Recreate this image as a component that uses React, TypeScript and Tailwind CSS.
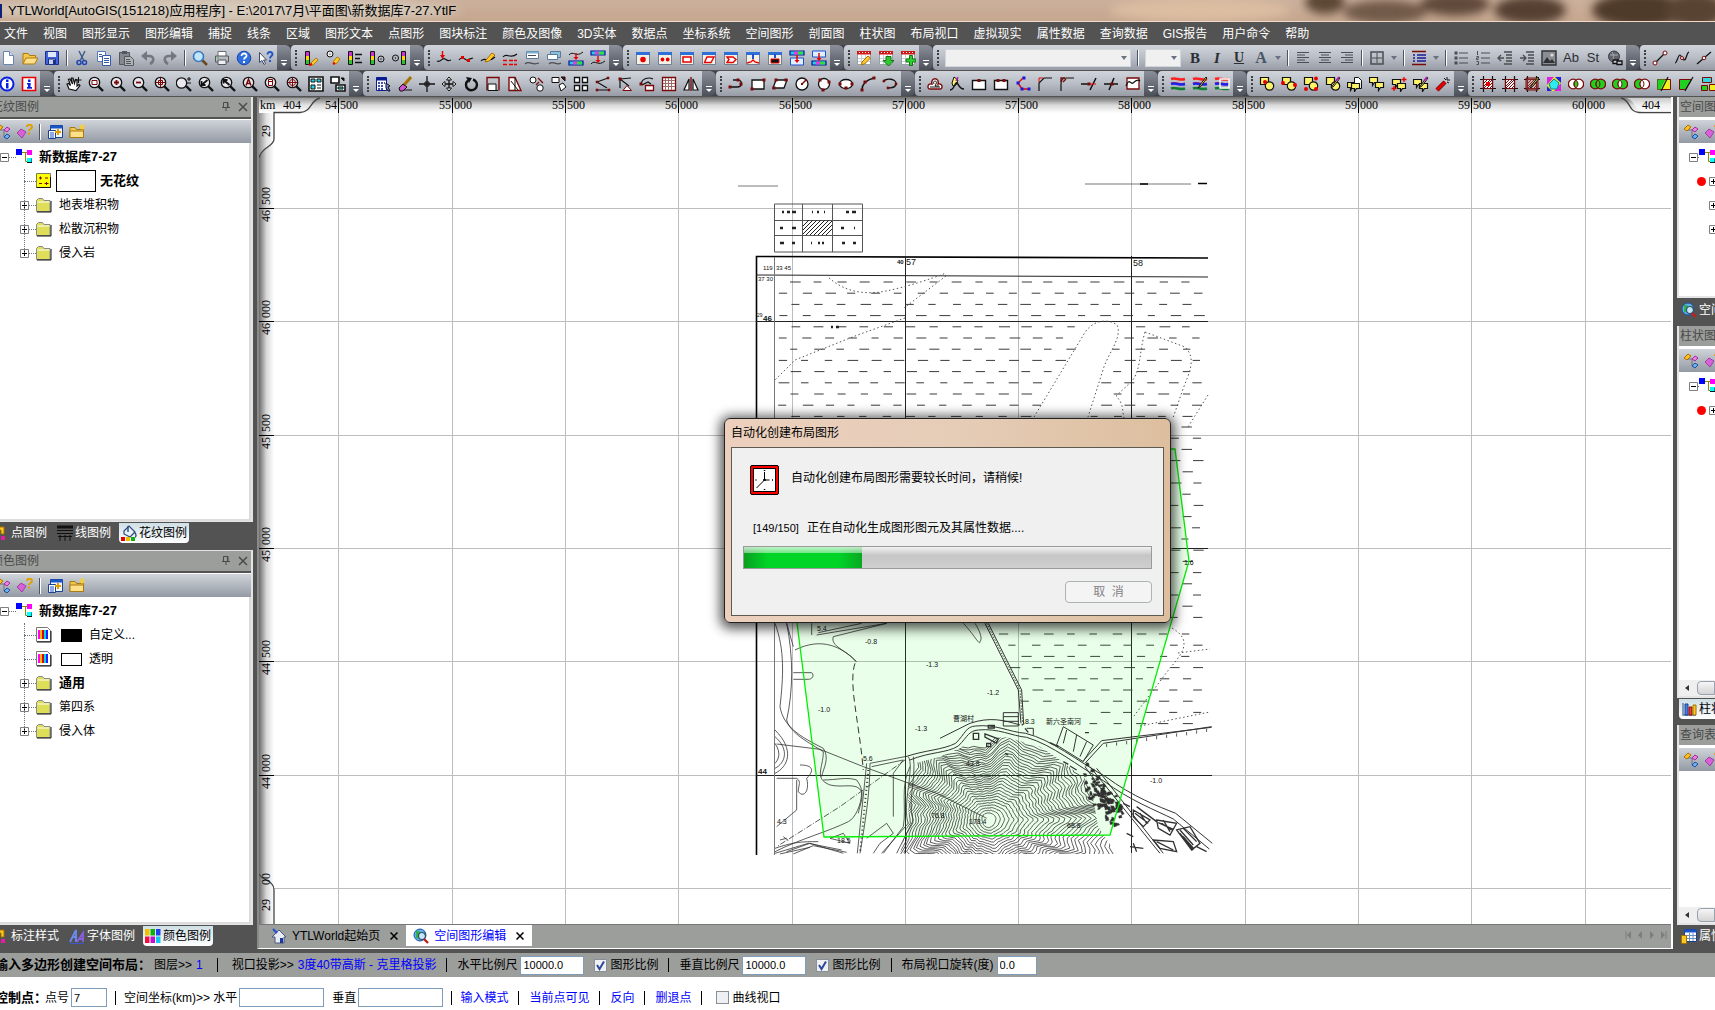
import React from "react";

type Shape = [string, string | null, string?, number?];

const b = (x: number, y: number, w: number, h: number) => `M${x} ${y}h${w}v${h}h${-w}z`;
const c = (x: number, y: number, r: number) => `M${x - r} ${y}a${r} ${r} 0 1 0 ${2 * r} 0a${r} ${r} 0 1 0 ${-2 * r} 0z`;

const K = "#111111";
const RED = "#e80000";
const MAR = "#7a0a0a";
const BLU = "#1f4fd0";
const YEL = "#fff36a";
const GRY = "#4a4d52";

const glass = (hx = 6.5, hy = 6.5): Shape[] => [
  ["M10 10L15 15", K, "none", 2.4],
  [c(hx, hy, 5.2), K, "#e8e8ee", 1.3],
];
const win = (): Shape[] => [
  [b(1.5, 2.5, 13, 12), "#6f7f95", "#f4f1e4"],
  [b(1, 2, 14, 3), null, "#2f6fd8"],
];
const tag = (x: number, y: number): Shape[] => [[`M${x} ${y}h8v5h-3l-2 3v-3h-3z`, K, YEL, 1.2]];
const sqc = (): Shape[] => [
  [b(1.5, 1.5, 8, 7), K, YEL, 1.2],
  [c(10.5, 10, 4.2), K, YEL, 1.2],
];
const bars = (x: number): Shape[] => [
  [b(x, 1.5, 4, 13), K, "#ffd800"],
  [b(x + 0.5, 2, 3, 4), null, "#d030d0"],
  [b(x + 0.5, 10, 3, 4), null, "#30c030"],
];
const calendar = (): Shape[] => [
  [b(1.5, 2.5, 13, 12), "#9aa0a8", "#ffffff"],
  [b(1, 1, 14, 3.5), null, "#d01818"],
  ["M5.5 5v9M9.5 5v9M2 8.5h12M2 11.5h12", "#c9ced6"],
  ["M3 2.5h1M6 2.5h1M9 2.5h1M12 2.5h1", "#ffffff"],
];
const hatch = (): Shape[] => [
  ["M3.5 0v16M12.5 0v16M0 3.5h16M0 12.5h16", K, "none", 1.2],
  [b(3.5, 3.5, 9, 9), MAR, "#ffffff", 1.2],
  ["M4 7l3-3M4 10l6-6M4 12l8-8M7 12l5-5M10 12l2-2", MAR],
];
const rings = (l: string, m: string, r: string): Shape[] => [
  [c(5.2, 8, 4.8), MAR, l, 1.3],
  [c(10.8, 8, 4.8), MAR, r, 1.3],
  ["M8 4.2a4.6 4.6 0 0 1 0 7.6a4.6 4.6 0 0 1 0-7.6z", MAR, m],
];
const dots = (pts: number[][], col = MAR, s = 3): Shape[] => pts.map(([x, y]) => [b(x - s / 2, y - s / 2, s, s), null, col] as Shape);
const band = (y: number): Shape[] => [
  [b(1, y, 14, 4), "#1010a0", "#20d0e0", 1.2],
  [b(5, y + 0.5, 4, 3), null, "#e040e0"],
  [b(9, y + 0.5, 5, 3), null, "#30e040"],
];
const stripes = (): Shape[] => [
  ["M1 3c5-2 8 2 14 0", "#ff2020", "none", 2.6],
  ["M1 7c5-2 8 2 14 0", "#ff2020", "none", 1],
  ["M1 8c5-2 8 2 14 0", "#2020e8", "none", 2.6],
  ["M1 12.5c5-2 8 2 14 0", "#108030", "none", 2.6],
];
const pencil: Shape = ["M14 1l-6 8-2 3 3-2 6-8z", K, YEL];

const I: Record<string, Shape[]> = {
  new: [["M3.5 1.5h6l4 4v9h-10z", "#6a86b0", "#ffffff"], ["M9.5 1.5v4h4", "#6a86b0", "#cfe0f5"]],
  open: [["M1 13.5v-10h5l1.500 2h6v3", "#b07a10", "#f5c74a"], ["M1 14l3-6h12l-3.500 6z", "#b07a10", "#ffe08a"]],
  save: [[b(1.5, 1.5, 13, 13), "#1a2f8a", "#4464d8"], [b(4, 2, 8, 5), null, "#dfe8ff"], [b(4.5, 9, 7, 5.5), "#1a2f8a", "#c8d2e8"], [b(9, 10, 2, 4), null, "#1a2f8a"]],
  cut: [["M5 1l4.500 9M11 1L6.500 10", "#3a5a86", "none", 1.4], [c(5, 12.500, 2), "#2345b0", "none", 1.5], [c(10.500, 12.500, 2), "#2345b0", "none", 1.5]],
  copy: [[b(1.5, 1.5, 8, 10), "#5878b8", "#ffffff"], [b(6.5, 5.5, 8, 10), "#3558b0", "#ffffff"], ["M8 8.500h5M8 10.500h5M8 12.500h5M3 4.500h3M3 6.500h3", "#3558b0"]],
  paste: [[b(1.5, 2.5, 10, 12), "#55585e", "#85888e"], [b(4, 1, 5, 3), null, "#55585e"], ["M6.500 6.500h6l3 3v6h-9z", "#55585e", "#b0b3b8"], ["M8 9.500h4M8 11.500h5M8 13.500h5", "#55585e"]],
  undo: [["M4 6h5c6 0 5 6 1 8", "#74777d", "none", 2.6], ["M1 6l6-5v10z", null, "#74777d"]],
  redo: [["M12 6H7c-6 0-5 6-1 8", "#74777d", "none", 2.6], ["M15 6L9 1v10z", null, "#74777d"]],
  find: [["M10 10l5 5", "#6a4a20", "none", 2.6], [c(6.5, 6.5, 5), "#3a78c0", "#bfe6ff", 1.6]],
  print: [[b(4, 1.5, 8, 5), "#6a6d72", "#ffffff"], [b(1.5, 6, 13, 6), "#55585e", "#b8bcc2"], [b(4, 10, 8, 4.500), "#55585e", "#eef0f3"], ["M3 8h2", "#30c030"]],
  help: [[c(8, 8, 6.8), "#1a45a8", "#2f6fe0"], ["M5.500 6c0-3.500 5.500-3.200 5 0c-.3 1.600-2.500 1.500-2.500 3.500", "#ffffff", "none", 1.8], [b(7, 11, 2, 2), null, "#ffffff"]],
  ask: [["M1.500 2.500v10l2.500-2 2 4 1.500-1-2-3.500h3z", "#3a4a66", "#ffffff"], ["M9.500 4.500c0-3.500 5.500-3 5 0c-.3 1.600-2.500 1.500-2.500 4", "#1f55c8", "none", 1.9], [b(11, 10, 2, 2), null, "#1f55c8"]],
  r1: [...bars(2.5), ["M8 13l5-5 2 2-5 5-3 .5z", "#b08000", "#ffc830"], ["M6 15l3-1", RED, "none", 2]],
  r2: [[c(5, 4, 3), K, "#eeeeee"], [c(5, 4, .6), null, K], ["M8 12l4-5 3 2-4 5z", "#b08000", "#ffc830"], ["M8 14l2-1", RED, "none", 2]],
  r3: [...bars(1.5), ["M8 4.500h7M8 8.500h5M8 12.500h7", K, "none", 1.3]],
  r4: [...bars(1.5), [c(12, 9, 3), K, "none"], [c(12, 9, .7), null, K]],
  r5: [...bars(10.5), [c(4.500, 8, 3), K, "none"], [c(4.500, 8, .7), null, K]],
  l1: [["M1 11c4 2 5-4 8-2s3 2 6 1", K, "none", 1.2], ["M6.500 1v5", RED, "none", 1.4], ["M4 5h5l-2.500 4z", null, RED]],
  l2: [["M1 10c4-6 7 2 9 0s3-1 5-2", K, "none", 1.2], [b(3, 6, 3, 3), null, RED], [b(9, 9, 3, 3), null, RED]],
  l3: [["M1 11c4-5 7 3 14-4", K, "none", 1.2], ["M6 10l6-7 3 2-6 6-4 1z", "#a87000", "#ffc830"]],
  l4: [["M1 7c4-5 7 3 14-3", K, "none", 1.2], ["M1 10.500h4M7 10.500h4M12 10.500h3M1 14.500h4M7 14.500h4M12 14.500h3", RED, "none", 1.300]],
  l5: [[b(2.500, 1.500, 12, 7), "#5a7a9a", "#ffffff"], [b(2.500, 1.500, 12, 2), null, "#7ab0d0"], ["M4 5.500h8", GRY], ["M1 14c4-4 7 2 14-1", GRY, "none", 1.200]],
  l6: [[b(4.500, 1.500, 10, 6), "#5a7a9a", "#8cc0d8"], [b(1.500, 4.500, 10, 5), "#5a7a9a", "#ffffff"], ["M3 14c4-4 7 2 12-1", GRY, "none", 1.200]],
  l7: [...band(11), ["M1 5c4-5 7 3 14-3", K], ["M8 3v5", RED, "none", 1.400], ["M5.500 7h5L8 10z", null, RED]],
  l8: [...band(1), ["M1 14c4-5 7 3 14-3", K], ["M8 6v5", RED, "none", 1.400], ["M5.500 10h5L8 13z", null, RED]],
  w1: [...win(), [c(8, 9.500, 2.800), null, RED]],
  w2: [...win(), [c(5.500, 9.500, 1.900), null, RED], [c(10.700, 9.500, 1.900), null, RED]],
  w3: [...win(), [b(4, 7, 8, 5), RED, "#ffffff", 1.500]],
  w4: [...win(), ["M6 7h7l-3 5.500H3.500z", RED, "#ffffff", 1.400]],
  w5: [...win(), ["M4 7h6l3 2.500-3 3H4l2-3z", RED, "#ffffff", 1.400]],
  w6: [...win(), ["M2 13l4-1 2-2 2 2 4 1", RED, "none", 1.300], ["M8 4v5", BLU, "none", 2]],
  w7: [...win(), [b(4, 9, 8, 4), RED, K], ["M8 4v4", BLU, "none", 2]],
  w8: [[b(1.5, 8, 13, 7), BLU, "#dff0ff"], ...band(1), ["M8 5v6", RED, "none", 1.500], ["M5.500 10h5L8 13z", null, RED]],
  w9: [[b(1.5, 1, 13, 6), BLU, "#dff0ff"], ...band(11), ["M8 3v6", RED, "none", 1.500], ["M5.500 8h5L8 11z", null, RED]],
  c1: [...calendar(), ["M6 12l6-6 2.500 2-6 6-3 .7z", "#a87000", "#ffc830"]],
  c2: [...calendar(), ["M8 6.500h5v4h3L10.500 16 5 10.500h3z", "#187018", "#30c830"]],
  c3: [...calendar(), ["M9.500 5.500h3v3.500h3.500v3h-3.500V15.500h-3V12H6V9h3.500z", "#187018", "#30d030"]],
  al: [["M2 2.500h12M2 5h8M2 7.500h12M2 10h8M2 12.500h12", GRY, "none", 1.200]],
  ac: [["M2 2.500h12M4 5h8M2 7.500h12M4 10h8M2 12.500h12", GRY, "none", 1.200]],
  ar: [["M2 2.500h12M6 5h8M2 7.500h12M6 10h8M2 12.500h12", GRY, "none", 1.200]],
  bd: [[b(2, 2, 12, 12), GRY, "none", 1.500], ["M8 3v10M3 8h10", GRY, "none", 1]],
  ls: [["M1 1.500h14M1 14.500h14", MAR, "none", 1.600], ["M6 5h9M6 8h9M6 11h9M2 5h2M2 8h2M2 11h2", "#1a1a9a", "none", 1.500]],
  bl: [["M6 3h9M6 8h9M6 13h9", GRY, "none", 1.200], ...dots([[3, 3], [3, 8], [3, 13]], GRY)],
  nl: [["M6 3h9M6 8h9M6 13h9M2.500 1v4M1.500 6.500h2v1.500h-2v1.500h2M1.500 11.500h2v3h-2", GRY]],
  o1: [["M7 2h8M9 5h6M9 8h6M9 11h6M7 14h8M1 8h6M4 5L1 8l3 3", GRY, "none", 1.300]],
  o2: [["M7 2h8M9 5h6M9 8h6M9 11h6M7 14h8M1 8h6M4 5l3 3-3 3", GRY, "none", 1.300]],
  im: [[b(1, 1, 14, 14), "#2f3134", "#8a8d92", 1.400], ["M2 13l4-6 3 4 2-2 3 4z", null, "#2f3134"], [c(11, 5, 1.600), null, "#dddddd"]],
  gl: [[c(7, 6.500, 5.500), "#3a3d42", "#60636a"], ["M3 5h8M5 2c2 3 2 6 0 9", "#aaaeb4"], [b(6, 10, 5, 3.500), K, "#c4c7cc", 1.300], [b(10, 11, 5, 3.500), K, "#c4c7cc", 1.300]],
  s1: [["M3 13L13 3", K, "none", 1.200], [c(3, 13, 2), MAR, "#ffffff"], [c(13, 3, 2), MAR, "#ffffff"]],
  s2: [["M1 13c2 0 3-8 5-8s1 5 4 5 2-7 5-8", K, "none", 1.200], [c(8, 8, 1.500), MAR, "#ffffff"]],
  s3: [["M1 14L15 2", K, "none", 1.200], [c(8, 8, 1.800), MAR, "#ffffff"]],
  i1: [[c(8, 8, 6.500), "#0a20e0", "#ffffff", 2], [b(7, 3.500, 2.500, 2.500), null, "#0a20e0"], [b(7, 7, 2.500, 5.500), null, "#0a20e0"]],
  i2: [[b(1.500, 1.500, 13, 13), RED, "#ffffff", 1.600], [b(7, 3.500, 2.500, 2.500), null, "#0a20e0"], [b(6, 7, 3.500, 1.500), null, "#0a20e0"], [b(7, 7, 2.500, 4), null, "#0a20e0"], [b(6, 11, 5, 1.700), null, "#0a20e0"]],
  hand: [["M3 13L1 8l1.500-.5 2 2-2-6 1.500-.5 2.500 5-1-6 1.500 0 1.500 5.500 1-4 1.500.5v6l2-1.500 1 1-4 5z", K, "#ffffff", 1.2], ["M12.500 1v6M9.500 4h6", K, "none", 1]],
  z1: [...glass(), [b(4, 4.500, 5, 4), MAR, "#ffffff"]],
  z2: [...glass(), ["M6.500 4v5M4 6.500h5", MAR, "none", 1.800]],
  z3: [...glass(), ["M4 6.500h5", MAR, "none", 1.800]],
  z4: [...glass(), ["M6.500 1.500v10M1.500 6.500h10", MAR, "none", 1.100], [b(4.500, 4.500, 4, 4), MAR, "none"]],
  z5: [...glass(5.500, 7), ["M13 1v4M11 3h4M11 7h4", K]],
  z6: [...glass(), ["M3.500 9l6-5M3.500 5v4h4", K, "none", 1.800]],
  z7: [...glass(), ["M3.500 4l6 5M3.500 7.500V4h4", K, "none", 2]],
  z8: [...glass(), ["M4 9.500l2.500-6.500 2.500 6.500M5 7.500h3", MAR, "none", 1.500]],
  z9: [...glass(), [b(4.500, 3.500, 4, 6), MAR, "#ffffff"], ["M5 5.500h3", MAR]],
  z10: [...glass(), [c(6.500, 6.500, 3), MAR, "none"], ["M6.500 1.500v10M1.500 6.500h10", MAR]],
  v1: [[b(1, 1, 14, 14), K, "#ffffff", 1.600], [b(3, 3, 4, 3), K, "#20d8e0"], [b(9, 3, 4, 3), K, "#20d8e0"], [b(3, 9, 4, 4), K, "#20d8e0"], ["M9 9h4M9 12h4", K]],
  v2: [[b(1, 1, 8, 6), K, "#ffffff", 1.600], [b(6, 9, 9, 6), K, "#ffffff", 1.600], [b(8, 11, 5, 2), K, "#20d8e0"], ["M11 2l3 3v-3z", K, K]],
  e1: [[b(1.500, 1.500, 10, 13), "#0a1a90", "#ffffff"], [b(1.500, 1.500, 10, 3), null, "#0a1a90"], ["M3 7h2M6 7h2M9 7h1M3 10h2M6 10h2M3 13h2M6 13h2", "#0a1a90", "none", 1.600], ["M11 7l4 3-2 1 2 4-2 0-2-3z", K, "#6a88f0"]],
  e2: [["M14 1L7 9", "#a87000", "none", 3], ["M2 12l4-4 4 3-4 4H3z", K, "#d050d0"], ["M7 14h8", K]],
  e3: [["M8 0v16M0 8h16", K, "none", 1.300], [b(6, 6, 4, 4), K, "none"]],
  e4: [["M8 1v14M1 8h14", K, "none", 1.300], ["M5.500 4L8 1l2.500 3zM5.500 12L8 15l2.500-3zM4 5.500L1 8l3 2.500zM12 5.500L15 8l-3 2.500z", K, "#ffffff"]],
  e5: [["M10 3.500a5.500 5.500 0 1 1-5 1", K, "none", 2.400], ["M3 1l6 1-3 5z", null, K]],
  e6: [["M2 14.500V1.500h12v13", MAR, "none", 1.400], [b(3, 8, 8, 6.500), K, "#ffffff"], ["M4 14.500h9", K]],
  e7: [["M2 14.500V1.500h6l6 13z", MAR, "#ffffff", 1.400], ["M8 1.500v13M4 5l7 9", K]],
  e8: [[c(4, 4, 3), K, "#ffffff"], [c(11, 12, 3.200), K, "#ffffff"], ["M9 2l5 5M10 6l-3 3", MAR, "none", 1.300]],
  e9: [[b(1, 1.500, 7, 5), K, "#ffffff"], ["M8 9l4 -2 3 4-5 4z", K, "#ffffff"], ["M10 1l4 4v-4z", K, MAR]],
  e10: [[b(1.500, 1.500, 5, 5), K, "#ffffff", 1.3], [b(9.500, 1.500, 5, 5), K, "#ffffff", 1.3], [b(1.500, 9.500, 5, 5), K, "#ffffff", 1.3], [b(9.500, 9.500, 5, 5), K, "#ffffff", 1.3]],
  e11: [["M2 6L13 2M2 6l10 6M2 14h13", K, "none", 1.100], ...dots([[2, 6], [13, 2], [2, 14], [14, 14]], MAR, 2.500)],
  e12: [["M3 12V3l9 7M3 3l11-1", K, "none", 1.200], ["M6 14.500l4-5 4.500 5z", MAR, "#ffffff"], ...dots([[3, 3]], MAR)],
  e13: [["M2 8c1-6 8-7 12-5M3 9l6-3 3 2", K, "none", 1.200], [b(6.500, 9.500, 8, 5), MAR, "#ffffff", 1.300], ...dots([[2, 8]], MAR)],
  e14: [[b(1.500, 1.500, 13, 13), MAR, "#ffffff", 1.3], ["M4.500 2v12M7.500 2v12M10.500 2v12M2 4.500h12M2 7.500h12M2 10.500h12", "#a06a6a"]],
  e15: [["M6 3v11H1z", K, "#ffffff", 1.2], ["M10 3v11h5z", K, "#ffffff", 1.2], ["M8 1v14", MAR, "none", 1.400]],
  p1: [["M1 11h8c6 0 5-6 2-7M11 4H5", K, "none", 1.300], ...dots([[13, 8], [2, 11], [10, 4]])],
  p2: [[b(2, 4, 12, 9), K, "#ffffff", 1.300], ...dots([[2, 13], [14, 4]])],
  p3: [["M4 4h11l-3 8H1z", K, "#ffffff", 1.300], ...dots([[4, 4], [14, 4], [2, 12]])],
  p4: [[c(8, 8, 6), K, "#ffffff", 1.300], ["M8 8l4-4", MAR, "none", 1.400], ...dots([[8, 8], [12, 4]], MAR, 2)],
  p5: [[c(8, 8, 5.500), K, "#ffffff", 1.300], ...dots([[4, 4], [13, 6], [7, 14]])],
  p6: [["M1.500 8a6.500 4.500 0 1 0 13 0a6.500 4.500 0 1 0-13 0z", K, "#ffffff", 1.300], ...dots([[2, 8], [14, 8], [8, 12]])],
  p7: [["M2 14C2 8 6 4 14 2", K, "none", 1.300], ...dots([[2, 14], [5, 6], [14, 2]])],
  p8: [["M1 6c3-5 14-3 13 2s-9 4-8 3", K, "none", 1.300], ...dots([[6, 12], [2, 5], [14, 8]], MAR, 2.5)],
  q1: [["M5 8c-2-7 8-7 6 0 5-1 5 5 2 5H3c-3 0-3-6 2-5z", MAR, "#ffffff", 1.400], ["M7 8c-2-4 4-4 2 0l-1 2h4M3 11h10", K]],
  q2: [["M5 1l4 3-2 5-3 1-1-3z", K, YEL], ["M1 14c4 0 4-5 6-7s2 6 8 6", K, "none", 1.400], ["M9 1l-2 4", "#b020b0", "none", 1.600]],
  q3: [[b(1.500, 4.500, 13, 9), K, "#ffffff", 1.400], ...dots([[8, 4.500]])],
  q4: [[b(1.500, 4.500, 13, 9), K, "#ffffff", 1.400], ...dots([[5, 4.500], [11, 4.500]])],
  q5: [["M9 1L3 7l4 6h7", RED, "none", 1.400], ...dots([[9, 2], [3, 7], [7, 13], [14, 13]], "#1818e0")],
  q6: [["M2 15V7l5-5h8", K, "none", 1.200], ["M2 6V2h4", RED]],
  q7: [["M2 15V8c0-4 2-6 5-6h8", K, "none", 1.200], ["M2 6V2h4M4 6l3-3", MAR, "none", 1.400]],
  q8: [["M0 8h8M15 2L9 14", K, "none", 1.500], ["M9 8h6", RED], ...dots([[8, 8]])],
  q9: [["M1 8h14M11 2L6 14", K, "none", 1.500], ...dots([[9, 8]])],
  q10: [["M2 2h12v11H2z", MAR, "#ffffff", 1.300], ["M1 10c3-9 5-1 7-3s5-4 7-2", K, "none", 1.200]],
  t1: stripes(),
  t2: [...stripes(), pencil],
  t3: [...stripes(), [b(6, 3, 9, 9), "#ffffff", "none", 1.400]],
  g1: [...sqc(), [c(6, 6, 2), null, RED]],
  g2: [...sqc(), [c(2, 7, 2), null, RED], [c(14, 9, 2), null, RED]],
  g3: [...sqc(), [c(13, 2.500, 2), null, RED], [c(3, 13, 2), null, RED], [c(13, 13, 2), null, RED]],
  g4: [...sqc(), pencil, ["M14 1l-3 4", "#b020b0", "none", 2]],
  g5: [...tag(.500, 6.500), ["M7.500 1.500h4l3 3v8h-7z", K, "#ffffff"], ...tag(4.500, 7.500)],
  g6: [...tag(.500, 1.500), ...tag(6.500, 6.500)],
  g7: [...tag(1.500, 3.500), ...tag(6.500, 7.500), ["M13 1v5M10.500 3.500h5M3 10v5M.5 12.500h5", RED, "none", 1.300]],
  g8: [...tag(.500, 3.500), ...tag(6.500, 7.500), pencil, ["M14 1l-3 4", "#b020b0", "none", 2]],
  g9: [["M2 14L10 6", "#701010", "none", 4.500], ["M2 14L10 6", RED, "none", 2.500], ["M12 1v3M15 4h-3M9 2l2 2M14 7l-2-1", K]],
  h1: [...hatch(), [b(6, 6, 4, 4), null, RED]],
  h2: hatch(),
  h3: [...hatch(), [b(2, 2, 12, 12), MAR, "#8a4a4a66"], pencil],
  h4: [[b(1, 1, 14, 14), null, "#f0f020"], ["M1 1h7L1 9zM15 15H8l7-8z", null, "#e020e0"], ["M15 1H9l6 6zM1 15V10l5 5z", null, "#2020e0"], ["M8 3l5 4-2 6H5L3 8z", "#108090", "#30e8f0"]],
  k1: rings("#ffffff", "#20d020", "#ffffff"),
  k2: rings("#20d020", "#20d020", "#20d020"),
  k3: rings("#20d020", "#ffffff", "#20d020"),
  k4: rings("#20d020", "#ffffff", "#ffffff"),
  k5: [[b(1.500, 3.500, 13, 10), MAR, "#f0f020"], ["M1.500 3.500h8l-5 10h-3z", null, "#20d020"], ["M12 1L5 15", K, "none", 1.200]],
  k6: [["M1.500 3.500h12l-6 10h-6z", MAR, "#20d020"], ["M15 1L7 15", K, "none", 1.200]],
  k7: [[b(2.500, 1.500, 9, 5), MAR, "#30d8e0"], [b(1.500, 9.500, 6, 5), MAR, "#20d020"], [b(9.500, 8.500, 6, 6), MAR, "#f0f020"]],
  tree: [["M5 6h4v7h4M9 6h4", "#6a7080"], ["M1 5l4-4 3 2-4 4z", "#b07000", "#ffc020"], ["M9 6l3-3 3 2-3 3z", "#a030a0", "#f080e0"], ["M9 13l3-3 3 2-3 3z", "#2050a0", "#70b0f0"]],
  gem: [["M0 9l4-4 5 3-4 6z", "#a040a0", "#d860d8"], ["M10 3c0-3 5-3 5 0 0 2-3 2-3 4", "#e0a000", "none", 2], [b(11, 8.500, 2, 2), null, "#e0a000"]],
  addw: [[b(3.500, 1.500, 12, 12), "#1a4090", "#f0f5ff"], [b(3.500, 1.500, 12, 3), null, "#1a55c8"], [b(1.500, 6.500, 7, 8), "#1a4090", "#ffffff"], ["M3 9h4M3 11h4M3 13h4", BLU], ["M11 5v6M8 8h6", "#e0a000", "none", 2]],
  fold: [["M1 13.500v-10h5l1.500 2h7v8z", "#a87a10", "#f3c64e"], ["M1 7h13.500v6.500H1z", "#a87a10", "#ffe08a"], ["M13 0v6M10 3h6M11 1l4 4M15 1l-4 4", "#ffd020"]],
  house: [["M1 9L8 2l7 7-2 0v6H4V9z", "#4a5a80", "#e8ecf4"], [b(9, 10, 3, 5), null, "#1a3aa0"], ["M2 1l4 4", BLU, "none", 2]],
  globe: [[c(7, 7, 6), "#1a55a0", "#60b0f0"], ["M3 3c3-1 5 1 4 4s-3 4-4 3zM9 5l3-1v5z", null, "#30b050"], [c(9, 8, 3.500), "#305070", "#e0f4ffcc", 1.200], ["M11 11l4 4", "#c02020", "none", 2.400]],
  puz: [[b(0, 8, 7, 7), null, "#30a040"], ["M4 2h7v7H8V5H4z", "#a07000", "#ffc820"], [b(8, 11, 4, 4), null, "#e020a0"]],
  lines: [["M0 2h16", "#111111", "none", 3], ["M0 5.500h16M0 8.500h16", "#111111"], ["M1 11.500h14M3 10v6M8 10v6M13 10v6", "#111111"]],
  bucket: [["M3 6l5-5 6 6-5 5-6-3z", "#2a4a80", "#e8f0fa", 1.200], ["M7 1v6M13 7c3 2 2 5 1 5", "#2a4a80", "none", 1.400], [b(0, 12, 4, 4), null, RED], [b(5, 12, 4, 4), null, "#f0c000"], [b(10, 12, 4, 4), null, "#10b010"]],
  fonts: [["M1 14L7 2v12M3 9h5", "#6a8af0", "none", 1.800], ["M8 14l6-9v9M10 11h5", "#8a60e0", "none", 1.800], ["M1 15.500h14", "#3a58c8"]],
  grid: [[b(0, 1, 4.500, 6.500), null, "#f0c000"], [b(5.500, 1, 4.500, 6.500), null, "#10b010"], [b(11, 1, 4.500, 6.500), null, "#2040f0"], [b(0, 8.500, 4.500, 6.500), null, "#f01040"], [b(5.500, 8.500, 4.500, 6.500), null, "#c010d0"], [b(11, 8.500, 4.500, 6.500), null, "#10c8f0"]],
  chart: [["M2 2v12h13", "#5a78a8", "none", 1.400], [b(4, 3, 3, 11), "#1a4090", "#4a80e0"], [b(8, 6, 3, 8), "#901010", "#e04030"], [b(12, 4, 3, 10), "#a07000", "#ffc820"]],
  table: [[b(3.500, 1.500, 12, 12), "#1a4090", "#ffffff"], [b(3.500, 1.500, 12, 3), null, "#1a55c8"], ["M4 7.500h11M4 10.500h11M8.500 5v8M12 5v8", "#6a90c8"], [b(.5, 7.500, 5, 8), "#a07000", "#ffc820"]],
  root: [["M5 3.500h9M9.500 3.500v9h5", "#8a8a00"], [b(0, 0, 6, 6), null, "#0000ff"], [b(11, 1, 5, 5), null, "#ff00ff"], [b(11, 9, 5, 4), null, "#00ffff"], ["M11 13.500h5v-4", K]],
  pat: [[b(.5, .5, 14, 14), "#7a7a60", "#ffff00"], ["M.5 14.500h14V4", K], ["M3 5h3M4.500 3.500v3M9 5h3M3 10.500h3M8.500 10.500h4M10.500 9v3", MAR]],
  folder: [["M.5 14.500V3.500l2-2h4l1.500 2h6v11z", "#8a8a8a", "#dede58"], ["M1 15h14V4", K], ["M1.500 5h12", "#ffffff"]],
  color: [["M.5 .5h11l3 3v11H.5z", "#777777", "#ffffff"], ["M1 15h14V4", K], [b(2, 3, 2, 9), null, "#ff00ff"], [b(4, 3, 2, 9), null, "#f0c000"], [b(6, 3, 2, 9), null, RED], [b(8, 3, 2, 9), null, "#00d8f0"], [b(10, 3, 2, 9), null, "#2020ff"]],
};

function Icon({ n, size = "h-4 w-4" }: { n: string; size?: string }) {
  return (
    <svg viewBox="0 0 16 16" className={`${size} shrink-0`} aria-hidden="true">
      {I[n].map(([d, s, f, w], i) => (
        <path key={i} d={d} stroke={s ?? "none"} fill={f ?? "none"} strokeWidth={w ?? 1} />
      ))}
    </svg>
  );
}

function Sep() {
  return (
    <div className="flex w-2 shrink-0 justify-center">
      <div className="h-4 w-0.5 border-r border-white bg-gray-600" />
    </div>
  );
}

function Caret() {
  return (
    <div className="flex w-3 shrink-0 items-center justify-center">
      <div className="border-x-[3px] border-t-4 border-x-transparent border-t-gray-500" />
    </div>
  );
}

function Combo({ label, w }: { label: string; w: string }) {
  return (
    <div className={`relative mx-[3px] flex h-[18px] items-center justify-end border border-gray-300 bg-[#f0f0f0] ${w}`}>
      <select aria-label={label} className="absolute inset-0 appearance-none bg-transparent" />
      <Caret />
    </div>
  );
}

const glyphs: Record<string, [string, string]> = {
  B: ["B", "font-bold text-[15px]"],
  It: ["I", "italic font-bold text-[15px]"],
  U: ["U", "underline font-bold text-[14px]"],
  A: ["A", "font-bold text-[16px] text-gray-600"],
};

function Tool({ n }: { n: string }) {
  if (n === "|") return <Sep />;
  if (n === "v") return <Caret />;
  const sans = n === "Ab" || n === "St";
  return (
    <button type="button" aria-label={n} className="flex h-full w-[22px] shrink-0 items-center justify-center">
      {glyphs[n] ? (
        <span className={`font-['Liberation_Serif',serif] leading-4 text-[#2c2e32] ${glyphs[n][1]}`}>{glyphs[n][0]}</span>
      ) : sans ? (
        <span className="text-[13px] leading-4 text-[#2c2e32]">{n}</span>
      ) : (
        <Icon n={n} />
      )}
    </button>
  );
}

function Group({ tools, first, children }: { tools: string; first?: string; children?: React.ReactNode }) {
  return (
    <div className={`flex h-full shrink-0 ${first ?? ""}`}>
      <div className="flex h-full items-center rounded-l-sm bg-linear-to-b from-[#d0d4da] via-[#b9bdc6] to-[#979ca6]">
        {!first && (
          <div className="flex w-[9px] justify-center">
            <div className="h-4 border-l-2 border-dotted border-[#3c3f46]" />
          </div>
        )}
        {children}
        {tools.split(" ").map((t, i) => (
          <Tool key={i} n={t} />
        ))}
      </div>
      <div className="flex w-3.5 flex-col items-center justify-end gap-0.5 rounded-r-md bg-linear-to-b from-[#8b909b] to-[#4c5059] pb-1">
        <div className="h-px w-1.5 bg-white" />
        <div className="border-x-[3px] border-t-[3px] border-x-transparent border-t-white" />
      </div>
    </div>
  );
}

const menus = ["文件", "视图", "图形显示", "图形编辑", "捕捉", "线条", "区域", "图形文本", "点图形", "图块标注", "颜色及图像", "3D实体", "数据点", "坐标系统", "空间图形", "剖面图", "柱状图", "布局视口", "虚拟现实", "属性数据", "查询数据", "GIS报告", "用户命令", "帮助"];

function Expander({ open }: { open?: boolean }) {
  return (
    <svg viewBox="0 0 9 9" className="h-[9px] w-[9px] shrink-0 bg-white" aria-hidden="true">
      <path d="M.5 .5h8v8h-8z" fill="none" stroke="#808080" />
      <path d={open ? "M2 4.500h5" : "M2 4.500h5M4.500 2v5"} stroke="#000" />
    </svg>
  );
}

function TreeRow({ icon, label, bold, leaf, swatch }: { icon: string; label: string; bold?: boolean; leaf?: boolean; swatch?: string }) {
  return (
    <li className="flex h-6 items-center">
      <div className="flex w-9 shrink-0 items-center pl-5">
        {leaf ? <div className="ml-1 h-px w-3 border-t border-dotted border-gray-500" /> : <><Expander /><div className="h-px w-[7px] border-t border-dotted border-gray-500" /></>}
      </div>
      <Icon n={icon} />
      {swatch && <div className={`border border-black ${swatch}`} />}
      <span className={bold ? `text-[13px] font-bold ${swatch ? "ml-1" : "ml-[7px]"}` : "ml-[7px]"}>{label}</span>
    </li>
  );
}

function PanelHead({ title, right }: { title: string; right?: boolean }) {
  return (
    <>
      <header className="flex h-5 items-center justify-between overflow-hidden bg-[#9c9e9c] pb-px text-[#4a4a4a]">
        <h2 className={`shrink-0 whitespace-nowrap ${right ? "ml-px" : "-ml-[9px]"}`}>{title}</h2>
        {!right && (
          <div className="flex items-center gap-[7px] pr-[3px]">
            <button type="button" aria-label="固定">
              <svg viewBox="0 0 10 10" className="h-2.5 w-2.5"><path d="M2.500 5.500v-5h4.500v5M6.500 .5v5M1 5.500h8M5 6v3" fill="none" stroke="#4a4a4a" /></svg>
            </button>
            <button type="button" aria-label="关闭">
              <svg viewBox="0 0 10 10" className="h-2.5 w-2.5"><path d="M1 1l8 8M9 1L1 9" stroke="#4a4a4a" strokeWidth="1.500" /></svg>
            </button>
          </div>
        )}
      </header>
      <div className={`mt-0.5 flex h-6 shrink-0 items-center gap-1.5 border-t border-white bg-linear-to-b from-[#d0d4da] to-[#949aa4] ${right ? "pl-1" : "-ml-[5px]"}`}>
        <Icon n="tree" />
        <Icon n="gem" />
        {!right && <><div className="-mx-[3px]"><Sep /></div><Icon n="addw" /><Icon n="fold" /></>}
      </div>
    </>
  );
}

function Tab({ icon, label, active }: { icon: string; label: string; active?: boolean }) {
  return (
    <button type="button" className={`flex h-5 shrink-0 items-center gap-0.5 px-0.5 whitespace-nowrap ${active ? "rounded-b-sm bg-linear-to-b from-[#cfdfe6] to-white text-black" : "text-white"}`}>
      <Icon n={icon} />
      {label}
    </button>
  );
}

function Tree({ children }: { children: React.ReactNode }) {
  return (
    <div className="min-h-0 flex-1 border-r-2 border-b-2 border-[#dcdcdc] bg-white pt-0.5">
      <div className="flex h-6 items-center">
        <Expander open />
        <div className="w-[7px] border-t border-dotted border-gray-500" />
        <Icon n="root" />
        <span className="ml-[7px] text-[13px] font-bold">新数据库7-27</span>
      </div>
      <ul className="relative">
        <div className="absolute top-0 bottom-3 left-6 border-l border-dotted border-gray-500" />
        {children}
      </ul>
    </div>
  );
}

function RightTree({ rows }: { rows: number }) {
  return (
    <div className="pt-0.5">
      <div className="flex h-6 items-center pl-2.5">
        <Expander open />
        <div className="w-[7px] border-t border-dotted border-gray-500" />
        <Icon n="root" />
      </div>
      {Array.from({ length: rows }, (_, i) => (
        <div key={i} className="flex h-6 items-center gap-[3px] pl-[18px]">
          <div className={`h-[9px] w-[9px] shrink-0 rounded-full ${i === 0 ? "bg-[#ff0000]" : ""}`} />
          <Expander />
        </div>
      ))}
    </div>
  );
}

function ScrollStub() {
  return (
    <div className="mt-auto flex h-4 items-center bg-[#efefef]">
      <div className="ml-1.5 border-y-[3px] border-r-4 border-y-transparent border-r-[#333333]" />
      <div className="ml-2 h-3.5 flex-1 rounded-l-sm border border-gray-400 bg-linear-to-b from-[#f6f6f6] to-[#d4d4d4]" />
    </div>
  );
}

let seed = 7;
const rnd = () => {
  seed = (seed * 16807) % 2147483647;
  return seed / 2147483647;
};

const dashRows = (x0: (y: number) => number, x1: number, y0: number, y1: number, skip: (x: number, y: number) => boolean) => {
  let d = "";
  let r = 0;
  for (let y = y0; y < y1; y += 11.2, r++) {
    for (let x = 778 + (r % 2 ? 0 : 12); x < x1; x += 23) {
      if (x > x0(y) && !skip(x, y)) d += `M${(x + rnd() * 2).toFixed(1)} ${y.toFixed(1)}h${(7 + rnd() * 4).toFixed(1)}`;
    }
  }
  return d;
};
const valley = (x: number, y: number) => y > 322 && x > 1088 - (y - 328) * 0.62 - 8 && x < 1116 - (y - 328) * 0.32;
const upper = dashRows(() => 776, 1200, 282, 425, valley);
const side = dashRows(() => 1165, 1200, 427, 622, () => false);
const lower = dashRows((y) => 985 + (y - 620) * 0.38, 1200, 634, 732, (x, y) => y > 712 && x < 1080);

const contours = Array.from({ length: 30 }, (_, k) => {
  const t = (k + 1) / 27;
  const pts: string[] = [];
  for (let a = 0; a < 360; a += 4) {
    const r = (a * Math.PI) / 180;
    const cs = Math.cos(r);
    const sn = Math.sin(r);
    const ridge = 0.09 * Math.sin(r * 5 + 0.6) + 0.07 * Math.sin(r * 9 + 1 + t) + 0.05 * Math.sin(r * 14 + 2 * t) + 0.035 * Math.sin(r * 23 + 3 * t);
    const wob = 1 + Math.min(t * 1.6, 1) * ridge + (rnd() - 0.5) * 0.014;
    const rx = cs < 0 ? 10 + 245 * t : 10 + 335 * t;
    const ry = sn < 0 ? 8 + 215 * t : 20 + 210 * t;
    pts.push(`${(745 + rx * cs * wob).toFixed(0)} ${(655 + ry * sn * wob).toFixed(0)}`);
  }
  return `M${pts.join("L")}z`;
}).join("");

const houses = Array.from({ length: 85 }, () => {
  const t = rnd();
  const x = 1035 + t * 100 + rnd() * 34 - 20;
  const y = 500 + t * 120 + rnd() * 80 - 15;
  return `M${Math.round(x)} ${Math.round(y)}l${5 + Math.round(rnd() * 6)} ${Math.round(rnd() * 6 - 3)}l${Math.round(rnd() * 5)} ${5 + Math.round(rnd() * 5)}l${-7 - Math.round(rnd() * 4)} 2z`;
}).join("");

const xs = [338, 452, 565, 678, 792, 905, 1018, 1131, 1245, 1358, 1471, 1585];
const xl = ["54,500", "55,000", "55,500", "56,000", "56,500", "57,000", "57,500", "58,000", "58,500", "59,000", "59,500", "60,000"];
const ys = [208, 321, 435, 548, 661, 775, 888];
const yl = ["46,500", "46,000", "45,500", "45,000", "44,500", "44,000", ",00"];

function MapView() {
  return (
    <svg className="absolute inset-0 h-full w-full" role="img" aria-label="空间图形">
      <defs>
        <linearGradient id="rt" x1="0" y1="0" x2="0" y2="1">
          <stop offset="0" stopColor="#6c6c6c" /><stop offset=".5" stopColor="#d8d8d8" /><stop offset="1" stopColor="#ffffff" />
        </linearGradient>
        <linearGradient id="rl" x1="0" y1="0" x2="1" y2="0">
          <stop offset="0" stopColor="#6c6c6c" /><stop offset=".5" stopColor="#d8d8d8" /><stop offset="1" stopColor="#ffffff" />
        </linearGradient>
        <clipPath id="hill"><path d="M480 762L505 660V560L525 490L600 470L660 445L700 412L800 412L900 440L960 480L1040 540L1060 600L1075 680L1130 762z" /></clipPath>
        <clipPath id="sheet"><path d="M40 0H1420V764H40z" /></clipPath>
      </defs>
      <g transform="translate(-259 -97)">
        <path d={xs.map((x) => `M${x + 0.5} 113V925`).join("") + ys.map((y) => `M274 ${y + 0.5}H1671`).join("")} stroke="#bdbdbd" />
        <path d="M738 186h40M1085 184h106" stroke="#555" strokeWidth=".8" />
        <path d="M1140 184h8M1198 183.500h9" stroke="#000" strokeWidth="1.500" />
        <path d="M756.500 855V256.500L1208 258" fill="none" stroke="#000" strokeWidth="1.600" />
        <path d="M756 275L1208 277M756 321.500H1208M756 775.500H1212M1172 548.500H1208M905.500 256V853M1131.500 256V853" stroke="#222" />
        <path d="M774.500 257V855" stroke="#777" />
        <path d="M774.500 204h88v48h-88zM802.500 204v48M832.500 204v48M774.500 220.500h88M774.500 235.500h88" fill="none" stroke="#555" />
        <path d="M803 226l6-6M803 230l10-10M803 234l14-14M806 235l15-15M810 235l15-15M814 235l15-15M818 235l14-14M822 235l10-10M826 235l6-6" stroke="#222" />
        <path d="M782 212h2M787 212h3M792 212h4M812 212h1M817 212h2M824 212h1M846 212h3M852 212h4M780 228h3M792 228h4M841 228h3M854 228h1M780 243h4M792 243h3M811 243h1M818 243h2M822 243h2M842 243h3M853 243h3M831 327h2M836 327h3" stroke="#222" strokeWidth="2.500" />
        <path d={upper} stroke="#3a3a3a" />
        <path d={side} stroke="#3a3a3a" />
        <path d={lower} stroke="#3a3a3a" />
        <g fill="none" stroke="#555" strokeDasharray="1.500 2.500">
          <path d="M826 275c18 18 40 20 60 16s45-12 60-18M946 276l-42 32M905 318l-50 18-60 24-20 20M1034 417l50-83c8-14 24-16 33-9 6 12-10 30-14 45l-15 47M1145 332l40 15c12 12 4 26-2 42l-10 29M1145 332c-6 20-4 40-14 50l-15 14c8 8 6 14 8 22M1208 395l-20 32" />
          <path d="M1172 628c20 12 12 24-2 40l-36 48M1178 653l32-4M1140 726l70-14" />
        </g>
        <path d="M1175 449L1189 561L1110 835L824 837L797 623V449z" fill="#00ff00" fillOpacity=".085" />
        <g transform="translate(740 600) scale(.3333)" clipPath="url(#sheet)" fill="none" stroke="#333" strokeWidth="2.400">
          <g clipPath="url(#hill)"><path d={contours} strokeWidth="2.200" stroke="#222" /></g>
          <path d="M105 70c30 80 25 160 15 250 10 60 60 90 130 125 20 30 0 60-5 85M140 70l20 70M165 150c80-40 140-10 185 35M140 70c20 100 20 200 0 290 10 40 70 70 110 95 0 50-30 80 20 100 40 10 80-10 95 20 0 40-20 80-40 90-60 30-140 50-220 90M250 540c40 0 70-10 100 0 30 40 10 70 5 100M105 390c60 60 40 110 0 130M105 410c45 40 30 80 0 95M105 430c20 30 10 50 0 60M160 218h55c10 10 0 20-10 20h-45M230 105L440 70M235 98l130-28M215 70v35M280 110c-10 30 40 40 68 75M280 110l160-40" />
          <path d="M345 190c-20 60 10 160 25 320" strokeDasharray="20 12" strokeWidth="3" />
          <path d="M670 70c30 30 50 70 50 55 10-10-5-40-15-55" />
          <path d="M735 70l100 200 8 100M745 70l100 200 6 100" strokeWidth="3" />
          <path d="M740 70l100 200 8 100" strokeDasharray="4 5" strokeWidth="3" />
          <path d="M110 432l130 16 130 52 220 80 150 75" />
          <path d="M495 480L300 620L110 740" strokeDasharray="18 5 3 5" />
          <path d="M390 490l105-20M395 500l95-20M390 490c0 90-15 180-30 270M380 490l-28 270M490 480l-30 40v130M505 470c20 30-20 150 0 200l-80 90M520 470c10 60-20 150 0 190l-50 100M510 500c-30 60-10 120-20 180l-60 80" />
          <path d="M385 510l-25 250" strokeDasharray="3 9" strokeWidth="6" />
          <path d="M497 470c60-20 110-20 150-40 30-30 30-50 60-52 60-6 100 18 150 22 80 20 150 80 240 130 80 60 160 90 210 110l110 90M510 480c60-25 110-20 145-42 30-30 30-45 60-48 60-6 100 18 145 22 80 24 150 84 230 130 80 60 160 90 210 115l108 90M600 415l90-45c60-20 100-10 150 5" strokeWidth="3" />
          <path d="M105 745c60-20 80-20 130-20M105 760l100-30 100 20M140 755l70-25 100 30M160 762l60-25 100 20M270 715l40-15 20 30zM120 762l90-20M380 715l60-45 20 30-40 30-20 30M130 710l15 12M120 720l20-5" />
          <path d="M180 495c30 0 50 10 20 40 10 40-10 60-25 40 0-20 10-30-5-40h-60M170 540l0 90-60 50" />
          <path d="M1035 490l55-60 325-50M1030 482l55-60 330-40M970 380l90 55-30 50-80-50zM980 390l-10 40M1010 405l-10 50M1040 425l-20 45M790 338h45v40h-45zM790 350h45M790 364h45M860 385h20v20M1035 500l80 110M1050 500l210 260M1070 505l200 255" strokeWidth="3" />
          <path d="M1100 431v10M1130 427v10M1160 423v10M1190 418v10M1220 413v10M1250 408v10M1280 404v10M1310 400v10M1340 396v10M1370 391v10M1400 386v10" />
          <path d={houses} fill="#333" strokeWidth="1" />
          <path d="M1180 630l50 30-20 20-30-30zM1190 620l60 45M1185 640l40 30M1250 660l60 10-20 35-35-20zM1255 668l45 20M1270 660l20 35M1310 690l40-10 30 50-25 20zM1320 690l40 45M1330 685l40 40M1240 720l60 5 10 30-50-10zM1250 725l50 25M1330 710l30 35M1320 700l40 50M1265 670l30 20M1200 640l20 30M1170 740l40 5M1180 730l10 25M1160 700l20 10M1150 610l20 10M1370 740l30 15" strokeWidth="4" />
          <path d="M795 460l10 5M700 400h16v18h-16zM735 402l40 15-6 12-34-18zM740 430h12v10h-12zM745 376h18v8h-18zM845 376l8-6M855 385l10 12M930 428l25 12M970 485l15 8M990 498l20 12M1035 398h12" strokeWidth="4" />
        </g>
        <path d="M1171 449h4L1189 561L1110 835L824 837L797 623" fill="none" stroke="#00f000" strokeWidth="1.300" />
        <g fontFamily="Liberation Sans, Noto Sans CJK SC, sans-serif" fontSize="7" fill="#111">
          <text x="865" y="644">-0.8</text><text x="926" y="667">-1.3</text><text x="818" y="712">-1.0</text><text x="987" y="695">-1.2</text>
          <text x="915" y="731">-1.3</text><text x="863" y="761">5.6</text><text x="966" y="766">43.8</text><text x="1150" y="783">-1.0</text>
          <text x="817" y="631">5.4</text><text x="1025" y="724">8.3</text><text x="931" y="818">76.8</text><text x="969" y="824">178.4</text><text x="1067" y="828">68.8</text>
          <text x="777" y="824">4.3</text><text x="837" y="843">18.5</text><text x="953" y="721">曹湖村</text><text x="1046" y="724">新六圣南河</text>
          <text x="1184" y="565">1.6</text>
          <text x="763" y="270" fontSize="6">119</text><text x="776" y="270" fontSize="6">33  45</text><text x="758" y="281" fontSize="6">37 30</text>
        </g>
        <g fontFamily="Liberation Sans, sans-serif" fill="#111">
          <text x="897" y="264" fontSize="6" fontWeight="700">40</text><text x="906" y="265" fontSize="9">57</text><text x="1133" y="266" fontSize="9">58</text>
          <text x="757" y="317" fontSize="5">29</text><text x="763" y="321" fontSize="8" fontWeight="700">46</text><text x="758" y="774" fontSize="8" fontWeight="700">44</text>
        </g>
        <path d="M259 97h1412v16H259z" fill="url(#rt)" />
        <path d="M259 113h15v812h-15z" fill="url(#rl)" />
        <path d={xs.map((x) => `M${x + 0.5} 98v15`).join("") + ys.slice(0, 6).map((y) => `M259 ${y + 0.5}h15`).join("")} stroke="#000" />
        <path d="M259 98h61c-8 2-10 14-20 14.500H274V139c0 8-13 10-15 19z" fill="#ffffff" fillOpacity=".25" stroke="none" />
        <path d="M320 98c-10 2-8 14-20 14.500h-26V139c0 8-13 8-15 19M1621 98c10 2 7 14 18 14.500h32M259 874c3 7 15 6 15 16v35" fill="none" stroke="#444" strokeWidth="1.300" />
        <path d="M1626 98c10 2 7 13 18 14h27V98z" fill="#ffffff" fillOpacity=".6" />
        <g fontFamily="Liberation Serif, serif" fontSize="12" fill="#000">
          <text x="260" y="109">km</text><text x="283" y="109">404</text><text x="1642" y="109">404</text>
          {xl.map((t, i) => {
            const [l, r] = t.split(",");
            return <React.Fragment key={t}><text x={xs[i] - 1} y="109" textAnchor="end">{l}</text><text x={xs[i] + 2} y="109">{r}</text></React.Fragment>;
          })}
          {yl.map((t, i) => {
            const [l, r] = t.split(",");
            return (
              <g key={t} transform={`translate(270 ${ys[i]}) rotate(-90)`}>
                <text x="-2" textAnchor="end">{l}</text><text x="3">{r}</text>
              </g>
            );
          })}
          <text transform="translate(270 137) rotate(-90)">29</text><text transform="translate(270 911) rotate(-90)">29</text>
        </g>
      </g>
    </svg>
  );
}

function Dialog() {
  return (
    <div role="dialog" aria-labelledby="dlg" className="absolute top-[321px] left-[465px] flex w-[447px] flex-col rounded-md border border-[#222] bg-linear-to-r from-[#ecd0bd] via-[#e6cdb8] to-[#ddbf9f] px-[6px] pb-[6px] shadow-[0_2px_12px_4px_rgba(0,0,0,0.65)]">
      <h1 id="dlg" className="flex h-7 items-center">自动化创建布局图形</h1>
      <div className="flex flex-col border border-[#5f5a50] bg-[#f0f0f0] px-[11px] pb-3">
        <div className="flex items-start gap-3 pt-[17px] pl-[7px]">
          <svg viewBox="0 0 29 30" className="h-[30px] w-[29px] shrink-0" aria-hidden="true">
            <rect x=".5" y=".5" width="28" height="29" rx="1.500" fill="#ff0000" stroke="#000" />
            <rect x="3.500" y="3.500" width="22" height="23" fill="#fff" stroke="#000" />
            <path d="M14.500 7v8h5M14.500 15l-8 8" fill="none" stroke="#000" />
            <path d="M13 15h3M5.500 15h1M22 15h1M14.500 5v1M14.500 24v1" stroke="#000" strokeWidth="1.500" />
          </svg>
          <p className="pt-[5px] leading-4">自动化创建布局图形需要较长时间，请稍候!</p>
        </div>
        <p className="mt-[25px] pl-2.5 leading-4"><span className="text-[11px]">[149/150]</span><span className="ml-2">正在自动化生成图形图元及其属性数据....</span></p>
        <div role="progressbar" aria-label="进度" aria-valuenow={29} className="mt-2.5 h-[23px] border border-[#9a9a9a] bg-linear-to-b from-[#f2f2f2] from-0% via-[#c6c6c6] via-40% to-[#cfcfcf]">
          <div className="h-full w-[29%] bg-[linear-gradient(to_bottom,rgba(255,255,255,0.75)_0%,rgba(255,255,255,0.45)_28%,transparent_30%),linear-gradient(to_right,#0a9e20,#00d427_20%,#00d427_80%,#0aa822)]" />
        </div>
        <button type="button" disabled className="mt-3 h-[22px] w-[87px] self-end rounded-sm border border-[#adb2b5] bg-[#f4f4f4] whitespace-pre text-[#838383]">取  消</button>
      </div>
    </div>
  );
}

function Bar({ gap = "mx-[10px]" }: { gap?: string }) {
  return <div className={`h-3.5 w-px shrink-0 bg-black ${gap}`} />;
}

function Field({ id, label, value, w, gap = "ml-[3px]" }: { id: string; label: string; value: string; w: string; gap?: string }) {
  return (
    <>
      <label htmlFor={id}>{label}</label>
      <input id={id} defaultValue={value} className={`h-[19px] border border-[#7f9db9] bg-white px-0.5 text-[11px] ${gap} ${w}`} />
    </>
  );
}

function Check({ id, label, on }: { id: string; label: string; on?: boolean }) {
  return (
    <>
      <span className="relative flex shrink-0">
        <input id={id} type="checkbox" defaultChecked={on} className="peer h-[13px] w-[13px] appearance-none border border-[#8a8f96] bg-[#eef0f3]" />
        <svg viewBox="0 0 13 13" className="pointer-events-none absolute inset-0 hidden h-[13px] w-[13px] peer-checked:block" aria-hidden="true">
          <path d="M3 6l2.500 4L10 2.500" fill="none" stroke="#2d4a9a" strokeWidth="2" />
        </svg>
      </span>
      <label htmlFor={id} className="ml-[3px]">{label}</label>
    </>
  );
}

export default function App() {
  return (
    <div className="flex h-screen flex-col overflow-hidden bg-[#535353] font-['Liberation_Sans','Noto_Sans_CJK_SC',sans-serif] text-[12px] leading-4 text-black">
      <div className="relative flex h-[22px] shrink-0 items-center overflow-hidden border-b border-[#f0d9c8] bg-linear-to-b from-[#cbb09c] to-[#c6a78f]">
        <svg className="absolute inset-0 h-full w-full" aria-hidden="true">
          <defs><filter id="soft"><feGaussianBlur stdDeviation="5" /></filter></defs>
          <g filter="url(#soft)">
            <ellipse cx="220" cy="10" rx="240" ry="11" fill="#d5cabc" />
            <ellipse cx="1200" cy="10" rx="90" ry="12" fill="#dcbda2" />
            <ellipse cx="1325" cy="2" rx="20" ry="12" fill="#5c4636" /><ellipse cx="1385" cy="12" rx="42" ry="12" fill="#715a48" />
            <ellipse cx="1455" cy="4" rx="35" ry="12" fill="#604a3a" /><ellipse cx="1530" cy="10" rx="36" ry="14" fill="#553f30" />
            <ellipse cx="1640" cy="10" rx="48" ry="18" fill="#4f3a2c" /><ellipse cx="1695" cy="10" rx="30" ry="18" fill="#584232" />
          </g>
        </svg>
        <div className="relative h-3.5 w-0.5 bg-[#10207a]" />
        <h1 className="relative ml-1.5 text-[13px] whitespace-nowrap">YTLWorld[AutoGIS(151218)应用程序] - E:\2017\7月\平面图\新数据库7-27.YtlF</h1>
      </div>
      <nav className="flex h-[23px] shrink-0 items-center gap-[15px] overflow-hidden bg-[#535353] pl-1 text-white">
        {menus.map((m) => <button key={m} type="button" className="shrink-0 whitespace-nowrap">{m}</button>)}
      </nav>
      <div className="flex h-[25px] shrink-0 overflow-hidden bg-[#3f434c]">
        <Group first="-ml-[3px]" tools="new open save | cut copy paste undo redo | find print help ask" />
        <Group tools="r1 r2 r3 r4 r5" />
        <Group tools="l1 l2 l3 l4 l5 l6 l7 l8" />
        <Group tools="w1 w2 w3 w4 w5 w6 w7 w8 w9" />
        <Group tools="c1 c2 c3" />
        <Group tools="B It U A v | al ac ar | bd v | ls v | bl nl o1 o2 im Ab St gl">
          <Combo label="字体" w="w-[186px]" />
          <Sep />
          <Combo label="字号" w="w-9" />
        </Group>
        <Group tools="s1 s2 s3" />
      </div>
      <div className="mt-px flex h-[25px] shrink-0 overflow-hidden bg-[#3f434c]">
        <Group first="-ml-[4px]" tools="i1 i2" />
        <Group tools="hand z1 z2 z3 z4 z5 z6 z7 z8 z9 z10 v1 v2" />
        <Group tools="e1 e2 e3 e4 e5 e6 e7 e8 e9 e10 e11 e12 e13 e14 e15" />
        <Group tools="p1 p2 p3 p4 p5 p6 p7 p8" />
        <Group tools="q1 q2 q3 q4 q5 q6 q7 q8 q9 q10" />
        <Group tools="t1 t2 t3" />
        <Group tools="g1 g2 g3 g4 g5 g6 g7 g8 g9" />
        <Group tools="h1 h2 h3 h4 k1 k2 k3 k4 k5 k6 k7" />
      </div>

      <main className="mt-px flex min-h-0 flex-1">
        <aside className="flex w-[253px] shrink-0 flex-col overflow-hidden">
          <section className="flex h-[425px] flex-col border-r-2 border-b border-[#e4e4e4]">
            <PanelHead title="花纹图例" />
            <Tree>
              <TreeRow leaf bold icon="pat" label="无花纹" swatch="ml-1 h-[22px] w-10" />
              <TreeRow icon="folder" label="地表堆积物" />
              <TreeRow icon="folder" label="松散沉积物" />
              <TreeRow icon="folder" label="侵入岩" />
            </Tree>
          </section>
          <div className="-ml-[9px] flex h-7 gap-1.5 pt-px">
            <Tab icon="puz" label="点图例" /><Tab icon="lines" label="线图例" /><Tab active icon="bucket" label="花纹图例" />
          </div>
          <section className="flex min-h-0 flex-1 flex-col border-t border-r-2 border-b border-[#e4e4e4]">
            <PanelHead title="颜色图例" />
            <Tree>
              <TreeRow leaf icon="color" label="自定义..." swatch="ml-[9px] h-[13px] w-[21px] bg-black" />
              <TreeRow leaf icon="color" label="透明" swatch="ml-[9px] h-[13px] w-[21px]" />
              <TreeRow bold icon="folder" label="通用" />
              <TreeRow icon="folder" label="第四系" />
              <TreeRow icon="folder" label="侵入体" />
            </Tree>
          </section>
          <div className="-ml-[9px] flex h-7 gap-1.5 pt-px">
            <Tab icon="puz" label="标注样式" /><Tab icon="fonts" label="字体图例" /><Tab active icon="grid" label="颜色图例" />
          </div>
        </aside>

        <section className="mb-1 ml-1 flex min-w-0 flex-1 flex-col border-x-2 border-b border-[#8a8a8a] border-r-white border-b-white">
          <div className="relative min-h-0 flex-1 bg-white">
            <MapView />
            <Dialog />
          </div>
          <div className="flex h-6 shrink-0 items-start border-t border-[#777] bg-[#9c9e9c]">
            <div className="flex h-[21px] items-center pr-2 pl-3">
              <Icon n="house" />
              <a href="#start" className="ml-[5px] text-black">YTLWorld起始页</a>
              <button type="button" aria-label="关闭起始页" className="ml-2.5">
                <svg viewBox="0 0 8 8" className="h-2 w-2"><path d="M.5 .5l7 7M7.500 .5l-7 7" stroke="#000" strokeWidth="1.500" /></svg>
              </button>
            </div>
            <div className="flex h-[21px] items-center bg-white pr-2 pl-[7px]">
              <Icon n="globe" />
              <a href="#edit" className="ml-[5px] text-[#0000ff]">空间图形编辑</a>
              <button type="button" aria-label="关闭编辑" className="ml-2.5">
                <svg viewBox="0 0 8 8" className="h-2 w-2"><path d="M.5 .5l7 7M7.500 .5l-7 7" stroke="#000" strokeWidth="1.500" /></svg>
              </button>
            </div>
            <svg viewBox="0 0 42 8" className="mt-1.5 mr-1 ml-auto h-2 w-[42px]" aria-hidden="true">
              <path d="M1 0v8M41 0v8" stroke="#7c7e7c" />
              <path d="M6 0v8L2 4zM17 0v8l-4-4zM25 0v8l4-4zM36 0v8l4-4z" fill="#7c7e7c" />
            </svg>
          </div>
        </section>

        <aside className="ml-1 flex w-[38px] shrink-0 flex-col overflow-hidden">
          <section className="flex h-[201px] shrink-0 flex-col border-b-2 border-l-2 border-[#e4e4e4] bg-white">
            <PanelHead right title="空间图形" />
            <RightTree rows={3} />
          </section>
          <div className="flex h-7 shrink-0 pt-0.5 pl-0.5 text-white"><Tab icon="globe" label="空间图形" /></div>
          <section className="flex h-[372px] shrink-0 flex-col border-b-2 border-l-2 border-[#e4e4e4] bg-white">
            <PanelHead right title="柱状图" />
            <RightTree rows={1} />
            <ScrollStub />
          </section>
          <div className="flex h-[27px] shrink-0 pt-px pl-0.5"><Tab active icon="chart" label="柱状图" /></div>
          <section className="flex min-h-0 flex-1 flex-col border-b-2 border-l-2 border-[#e4e4e4] bg-white">
            <PanelHead right title="查询表" />
            <ScrollStub />
          </section>
          <div className="flex h-7 shrink-0 pt-px pl-0.5"><Tab icon="table" label="属性表" /></div>
        </aside>
      </main>

      <div className="flex h-6 shrink-0 items-center overflow-hidden bg-[#9c9e9c] whitespace-nowrap">
        <span className="-ml-[5px] w-[159px] shrink-0 text-[13px] font-bold">输入多边形创建空间布局：</span>
        图层&gt;&gt;<a href="#layer" className="ml-1 text-[#0000ff]">1</a>
        <Bar gap="mx-3.5" />
        视口投影&gt;&gt;<a href="#proj" className="ml-1 text-[#0000ff]">3度40带高斯 - 克里格投影</a>
        <Bar />
        <Field id="hs" label="水平比例尺" value="10000.0" w="w-16" />
        <div className="w-2.5" /><Check id="c1" label="图形比例" on />
        <Bar />
        <Field id="vs" label="垂直比例尺" value="10000.0" w="w-16" />
        <div className="w-2.5" /><Check id="c2" label="图形比例" on />
        <Bar />
        <Field id="rot" label="布局视口旋转(度)" value="0.0" w="w-10" />
      </div>
      <div className="flex h-[33px] shrink-0 items-center overflow-hidden bg-white pt-2 whitespace-nowrap">
        <span className="-ml-[5px] w-[50px] shrink-0 text-[13px] font-bold">控制点：</span>
        <Field id="no" label="点号" value="7" w="w-9" gap="ml-0.5" />
        <Bar gap="mx-2" />
        <Field id="sx" label="空间坐标(km)>> 水平" value="" w="w-[85px]" gap="ml-0.5" />
        <div className="w-2" />
        <Field id="sy" label="垂直" value="" w="w-[85px]" gap="ml-0.5" />
        <Bar gap="mx-2" />
        <a href="#mode" className="text-[#0000ff]">输入模式</a><Bar />
        <a href="#vis" className="text-[#0000ff]">当前点可见</a><Bar />
        <a href="#rev" className="text-[#0000ff]">反向</a><Bar />
        <a href="#del" className="text-[#0000ff]">删退点</a><Bar />
        <div className="w-1" />
        <Check id="cv" label="曲线视口" />
      </div>
    </div>
  );
}
